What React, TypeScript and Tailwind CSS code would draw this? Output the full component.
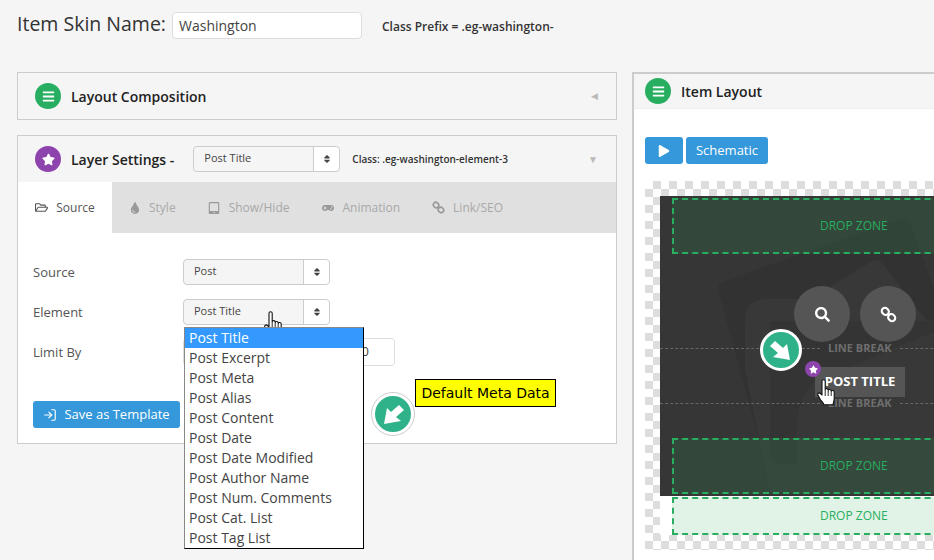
import React from "react";
import { FaBars, FaStar, FaSearch, FaRegFolderOpen, FaTint, FaTabletAlt, FaGamepad, FaPlay, FaSort } from "react-icons/fa";
import { LogIn } from "lucide-react";

const OPTIONS = [
  "Post Title",
  "Post Excerpt",
  "Post Meta",
  "Post Alias",
  "Post Content",
  "Post Date",
  "Post Date Modified",
  "Post Author Name",
  "Post Num. Comments",
  "Post Cat. List",
  "Post Tag List",
];

const Badge = ({ color, children }: { color: string; children: React.ReactNode }) => (
  <span className={`flex h-[26px] w-[26px] shrink-0 items-center justify-center rounded-full text-[13px] text-white ${color}`}>
    {children}
  </span>
);

const Select = ({ label, className }: { label: string; className: string }) => (
  <div className={`flex h-[26px] w-[147px] shrink-0 items-center rounded-[4px] border border-[#ccc] bg-[#f5f5f5] text-[11px] text-[#444] ${className}`}>
    <span className="flex-1 pb-[1px] pl-[10px]">{label}</span>
    <span className="flex h-full w-[26px] items-center justify-center rounded-r-[4px] border-l border-[#ccc] bg-white text-[10px] text-[#444]">
      <FaSort />
    </span>
  </div>
);

const Chain = ({ className }: { className: string }) => (
  <svg viewBox="0 0 16 16" fill="none" stroke="currentColor" strokeWidth="2" className={className}>
    <rect x="1.5" y="2" width="7" height="6" rx="3" transform="rotate(45 5 5)" />
    <rect x="7.5" y="8" width="7" height="6" rx="3" transform="rotate(45 11 11)" />
  </svg>
);

const Hand = ({ className }: { className: string }) => (
  <svg viewBox="0 0 20 27" className={className}>
    <path
      d="M5 2.2c0-2 3.2-2 3.2 0v8.6c0-1.6 3-1.6 3 .2v.6c0-1.6 3-1.5 3 .3v.6c.1-1.5 3-1.3 3 .5v6.8c0 2.4-1 3.4-1.2 6H7c-.5-2-2-3-3.5-5L1 16.2c-1-1.6 1-3.2 2.5-1.7L5 16z"
      fill="#fff"
      stroke="#111"
      strokeWidth="1.1"
      strokeLinejoin="round"
    />
    <path d="M8.2 11v6M11.2 12v5M14.2 13v4" stroke="#111" strokeWidth=".9" fill="none" />
  </svg>
);

const Arrow = ({ flip, className }: { flip?: boolean; className: string }) => (
  <span className={`absolute flex h-[42px] w-[42px] items-center justify-center rounded-full bg-[#2fb28a] ${className}`}>
    <svg viewBox="0 0 26 26" className={`h-[26px] w-[26px] ${flip ? "-scale-x-100" : ""}`}>
      <path d="M2 9l5-5 8 7 4-4 3 16-17-3 5-4z" fill="#fff" />
    </svg>
  </span>
);

const Tab = ({ icon, label }: { icon: React.ReactNode; label: string }) => (
  <div className="flex items-center gap-[8px] text-[#a8a8a8]">
    <span className="flex w-[13px] justify-center text-[12px] text-[#999]">{icon}</span>
    {label}
  </div>
);

const Row = ({ label, children }: { label: string; children?: React.ReactNode }) => (
  <div className="flex h-[26px] items-center text-[13px] text-[#555]">
    <span className="w-[150px] pt-[1px]">{label}</span>
    {children}
  </div>
);

const DropZone = ({ className }: { className: string }) => (
  <div className={`flex items-center border-2 border-dashed border-[#27ae60] text-[12px] text-[#27ae60] ${className}`}>
    <span className="ml-[146px]">DROP ZONE</span>
  </div>
);

const LineBreak = ({ className }: { className: string }) => (
  <div className={`absolute left-0 right-0 flex items-center ${className}`}>
    <div className="w-[160px] border-t border-dashed border-[#666]" />
    <span className="px-[8px] text-[11px] font-bold text-[#6e6e6e]">LINE BREAK</span>
    <div className="flex-1 border-t border-dashed border-[#666]" />
  </div>
);

export default function App() {
  return (
    <div className="relative h-[560px] w-[934px] overflow-hidden bg-[#f5f5f5] font-['Open_Sans',sans-serif]">
      <div className="flex h-[72px] items-start pl-[17px] pt-[12px]">
        <span className="text-[19.5px] leading-[24px] text-[#333]">Item Skin Name:</span>
        <div className="ml-[6px] flex h-[27px] w-[190px] items-center rounded-[4px] border border-[#ddd] bg-white pl-[6px] text-[14px] text-[#444]">
          Washington
        </div>
        <span className="ml-[20px] mt-[6px] text-[12px] font-semibold leading-[17px] text-[#333]">Class Prefix = .eg-washington-</span>
      </div>

      <div className="flex items-start pl-[17px]">
        <div className="flex w-[600px] shrink-0 flex-col gap-[15px]">
          <div className="flex h-[48px] items-center border border-[#ccc] pl-[17px] pr-[18px]">
            <Badge color="bg-[#27ae60]"><FaBars /></Badge>
            <span className="ml-[10px] flex-1 text-[14px] font-semibold text-[#222]">Layout Composition</span>
            <span className="text-[9px] text-[#bbb]">◀</span>
          </div>

          <div className="h-[309px] border border-[#ccc] bg-white">
            <div className="flex h-[46px] items-center bg-[#f5f5f5] pl-[17px] pr-[18px]">
              <Badge color="bg-[#8e44ad]"><FaStar /></Badge>
              <span className="ml-[10px] text-[14px] font-semibold text-[#222]">Layer Settings -</span>
              <Select label="Post Title" className="ml-[19px]" />
              <span className="ml-[12px] flex-1 whitespace-nowrap text-[10px] font-semibold text-[#333]">Class: .eg-washington-element-3</span>
              <span className="text-[10px] text-[#bbb]">▼</span>
            </div>
            <div className="flex h-[51px] items-stretch bg-[#e0e0e0] text-[12px]">
              <div className="flex w-[94px] items-center justify-center gap-[8px] bg-white text-[#555]">
                <FaRegFolderOpen className="text-[13px]" />
                Source
              </div>
              <div className="ml-[16px] flex items-center gap-[32px]">
                <Tab icon={<FaTint />} label="Style" />
                <Tab icon={<FaTabletAlt />} label="Show/Hide" />
                <Tab icon={<FaGamepad />} label="Animation" />
                <Tab icon={<Chain className="h-[13px] w-[13px]" />} label="Link/SEO" />
              </div>
            </div>
            <div className="flex flex-col gap-[14px] pl-[15px] pt-[26px]">
              <Row label="Source"><Select label="Post" className="" /></Row>
              <Row label="Element"><Select label="Post Title" className="" /></Row>
              <Row label="Limit By">
                <div className="flex h-[28px] w-[212px] items-center justify-end rounded-[4px] border border-[#ddd] pr-[25px] text-[13px] text-[#444]">
                  0
                </div>
              </Row>
            </div>
            <div className="ml-[15px] mt-[36px] flex h-[27px] w-[147px] items-center justify-center gap-[7px] rounded-[3px] bg-[#3498db] text-[13px] text-white">
              <LogIn size={14} strokeWidth={2} />
              Save as Template
            </div>
          </div>
        </div>

        <div className="ml-[15px] h-[500px] w-[400px] shrink-0 border-l-2 border-t-2 border-[#ccc] bg-white">
          <div className="flex h-[35px] items-center border-b border-[#eee] bg-[#f5f5f5] pl-[11px]">
            <Badge color="bg-[#27ae60]"><FaBars /></Badge>
            <span className="ml-[10px] text-[14px] font-semibold text-[#222]">Item Layout</span>
          </div>
          <div className="flex gap-[3px] pl-[11px] pt-[28px]">
            <div className="flex h-[27px] w-[38px] items-center justify-center rounded-[3px] bg-[#3498db] text-[12px] text-white">
              <FaPlay />
            </div>
            <div className="flex h-[27px] w-[82px] items-center justify-center rounded-[3px] bg-[#3498db] text-[13px] text-white">
              Schematic
            </div>
          </div>

          <div className="ml-[11px] mt-[17px] h-[369px] w-[400px] bg-[repeating-conic-gradient(#dddddd_0_25%,#ffffff_0_50%)] bg-[length:16px_16px] pl-[15px] pt-[15px]">
            <div className="relative h-[300px] w-[400px] overflow-hidden bg-[#363636]">
              <svg viewBox="0 0 300 300" className="absolute left-0 top-0 h-[300px] w-[300px]">
                <path d="M62 86L240 23q8-2 11 5l49 140-200 80-41-152q-2-7 3-10z" fill="#323232" />
                <path d="M85 173V125q0-22 22-22h43l62-38q6-3 10 2l78 100v130H110z" fill="#383838" />
                <path d="M110 125h190v143H122q-12 0-12-12z" fill="#343434" />
                <path d="M137 225q0-18 18-40l145-60v143H137z" fill="#383838" />
              </svg>

              <DropZone className="absolute left-[12px] top-[2px] h-[56px] w-[400px] bg-[#27ae60]/15" />

              <span className="absolute left-[134px] top-[90px] flex h-[56px] w-[56px] items-center justify-center rounded-full bg-[#555] text-[15px] text-white">
                <FaSearch />
              </span>
              <span className="absolute left-[200px] top-[90px] flex h-[56px] w-[56px] items-center justify-center rounded-full bg-[#555] text-white">
                <Chain className="h-[17px] w-[17px]" />
              </span>

              <LineBreak className="top-[144px]" />
              <div className="absolute left-[155px] top-[171px] flex h-[30px] w-[90px] items-center justify-center bg-[#555] text-[13px] font-bold text-white">
                POST TITLE
              </div>
              <LineBreak className="top-[199px]" />

              <span className="absolute left-[145px] top-[165px] flex h-[16px] w-[16px] items-center justify-center rounded-full bg-[#8e44ad] text-[9px] text-white">
                <FaStar />
              </span>
              <Arrow className="left-[100px] top-[133px] border-[3px] border-white" />
              <Hand className="absolute left-[157px] top-[183px] h-[27px] w-[20px]" />

              <DropZone className="absolute left-[12px] top-[242px] h-[56px] w-[400px] bg-[#27ae60]/15" />
            </div>
            <div className="h-[39px] w-[400px] bg-white pl-[12px] pt-[1px]">
              <DropZone className="h-[38px] w-[400px] bg-[#e0f3e6]" />
            </div>
          </div>
        </div>
      </div>

      <Hand className="absolute left-[264px] top-[311px] h-[27px] w-[20px]" />

      <div className="absolute left-[184px] top-[327px] w-[180px] border border-[#888] border-b-black border-r-black bg-white text-[14px] text-[#444]">
        {OPTIONS.map((option, i) => (
          <div key={option} className={`h-[20px] pl-[4px] leading-[20px] ${i === 0 ? "bg-[#3399ff] text-white" : ""}`}>
            {option}
          </div>
        ))}
      </div>

      <Arrow flip className="left-[372px] top-[393px] border-[3px] border-white outline outline-[#ccc]" />

      <div className="absolute left-[415px] top-[379px] flex h-[28px] w-[141px] items-center justify-center border border-black bg-[#ffff00] pt-[1px] font-['DejaVu_Sans',sans-serif] text-[14px] text-black">
        Default Meta Data
      </div>
    </div>
  );
}
